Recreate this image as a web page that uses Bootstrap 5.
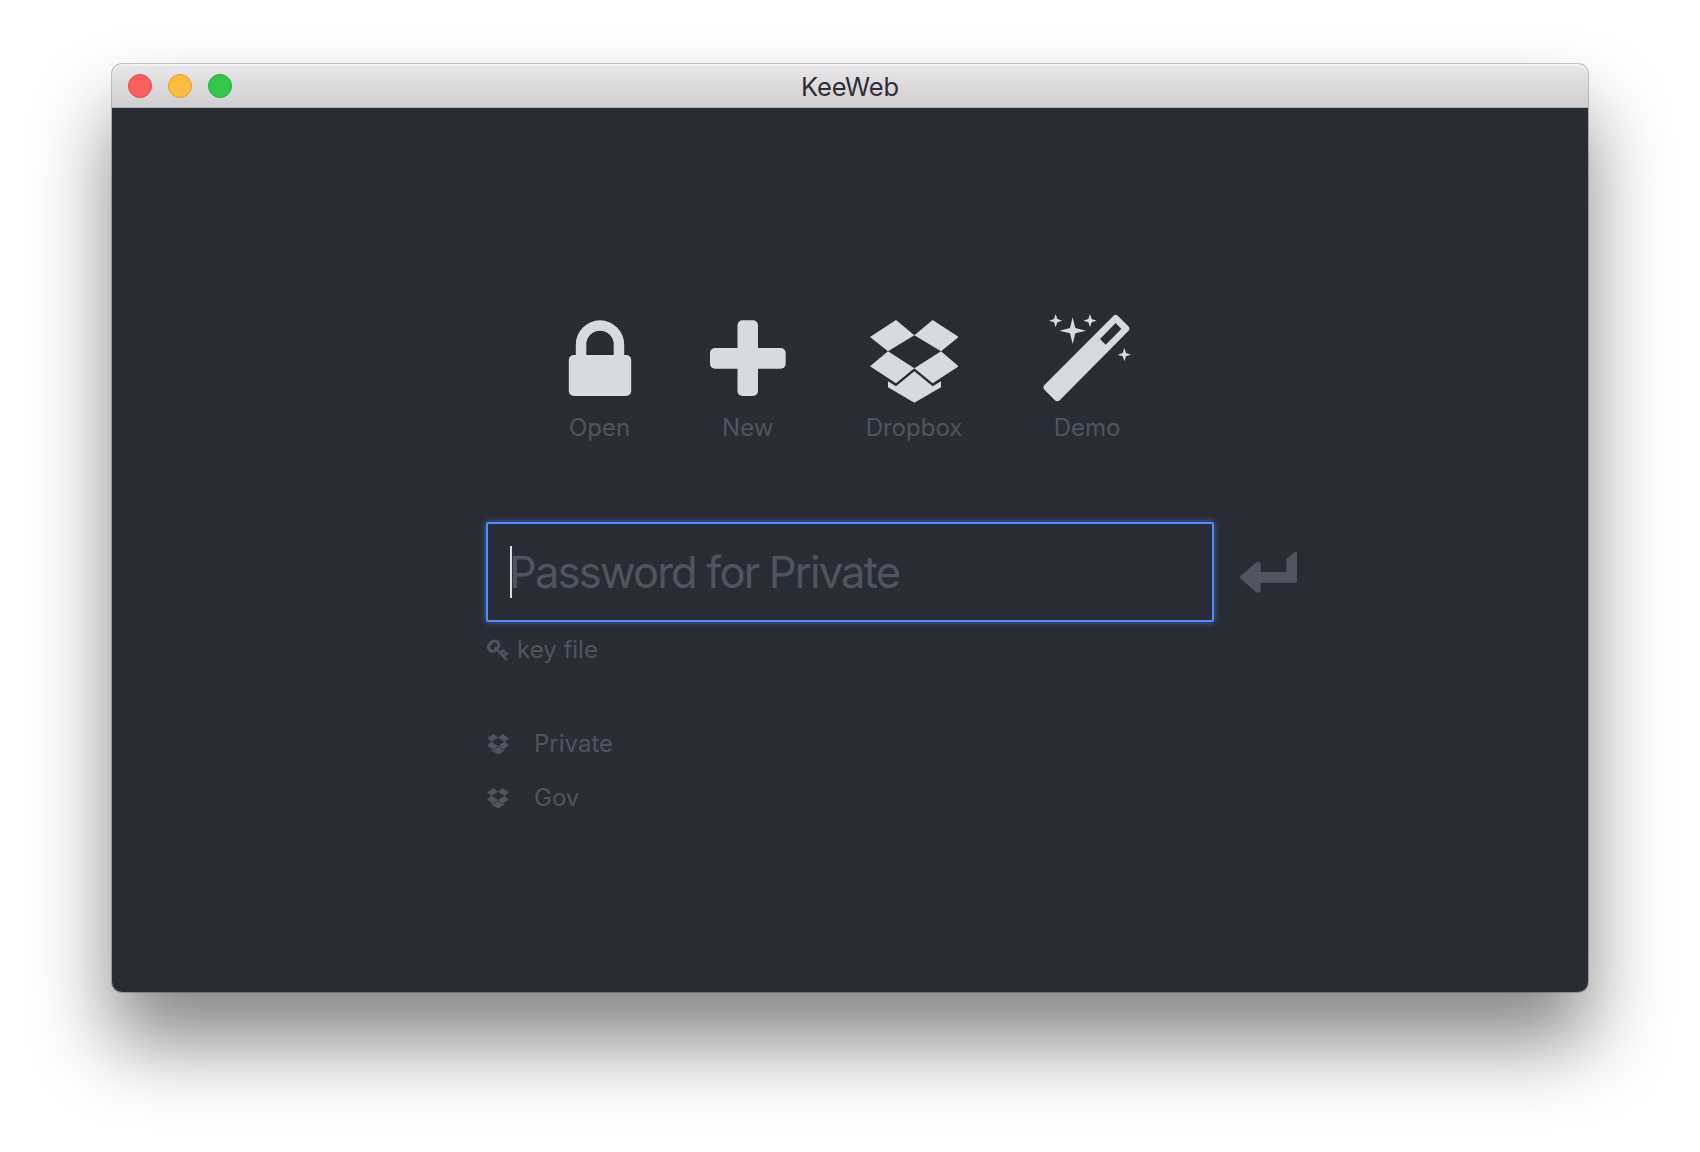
<!DOCTYPE html>
<html lang="en">
<head>
<meta charset="utf-8">
<title>KeeWeb</title>
<link href="https://cdn.jsdelivr.net/npm/bootstrap@5.3.0/dist/css/bootstrap.min.css" rel="stylesheet">
<style>
body{background:#fff;font-family:Inter,"Noto Sans",sans-serif;height:1152px;padding-top:64px}
svg{display:block;flex:none;fill:currentColor}
.app-window{width:1476px;height:928px;border-radius:10px;background:#282c34;box-shadow:0 0 0 1px rgba(0,0,0,.22),0 50px 80px rgba(0,0,0,.48)}
.titlebar{height:44px;border-radius:10px 10px 0 0;background:linear-gradient(#e9e7ea,#d2cfd3);border-bottom:1px solid #aeb0b3;box-shadow:inset 0 2px 0 #f5f4f5;padding-left:16px}
.light{width:24px;height:24px;border-radius:50%;border:1px solid}
.light-red{background:#fc605c;border-color:#df4744}
.light-amber{background:#fdbc40;border-color:#de9f34}
.light-green{background:#34c84a;border-color:#27aa35}
.app-title{left:0;right:0;top:5px;font-size:25.5px;line-height:36px;color:#302e33;letter-spacing:-.15px}
.actions{padding:202px 0 0 422.5px;color:#d7dae2}
.action-label{margin-top:4px;font-size:24px;line-height:36px;color:#50545f}
.dim{color:#50545f;font-size:24px;line-height:36px}
.w-a{width:130px}.w-b{width:166.5px}.w-c{width:166px}.w-d{width:180px}
.entry{margin:76px 0 0 374px;gap:26px}
.pass-box{width:728px;height:100px}
.pass-box .form-control{height:100px;border:2px solid #528bff;border-radius:2px;background:#282c34;padding:0 21px;font-size:43.5px;letter-spacing:-1.8px;box-shadow:0 0 6px rgba(82,139,255,.65)}
.pass-box .form-control::placeholder{color:#50545f;opacity:1}
.caret{left:24px;top:24px;width:2px;height:52px;background:#d7dae2}
.extras{margin-left:373.5px}
.keyrow{padding-top:10px;gap:8.5px}
.recent{padding:58px 0 0 1.5px;gap:18px}
.recent-row{gap:25px}
</style>
<script src="https://cdn.jsdelivr.net/npm/bootstrap@5.3.0/dist/js/bootstrap.bundle.min.js"></script>
</head>
<body>
<svg width="0" height="0" class="position-absolute"><defs>
<symbol id="dropbox" viewBox="59 60 266 248"><path d="M137 60L192 106 113 154 59 111ZM247 60L325 111 272 154 192 106ZM113 154L192 205 137 250 59 199ZM272 154L325 199 247 250 192 205ZM192 214L247 259 272 244V262L192 308 113 262V244L137 259Z"/></symbol>
</defs></svg>
<main class="app-window mx-auto">
  <header class="titlebar position-relative d-flex align-items-center">
    <div class="d-flex gap-3"><span class="light light-red"></span><span class="light light-amber"></span><span class="light light-green"></span></div>
    <div class="app-title position-absolute text-center">KeeWeb</div>
  </header>
  <section class="actions d-flex">
    <div class="w-a d-flex flex-column align-items-center">
      <svg width="64" height="96" viewBox="567.5 310 64 96"><path fill-rule="evenodd" d="M575.3 355V344.5A24.2 24.2 0 0 1 623.7 344.5V355H625.7A5 5 0 0 1 630.7 360V391A5 5 0 0 1 625.7 396H573.3A5 5 0 0 1 568.3 391V360A5 5 0 0 1 573.3 355ZM585.8 355H613.2V344.5A13.7 13.7 0 0 0 585.8 344.5Z"/></svg>
      <div class="action-label">Open</div>
    </div>
    <div class="w-b d-flex flex-column align-items-center">
      <svg width="76" height="96" viewBox="0 0 76 96"><rect x="27.5" y="10.3" width="20.5" height="75.7" rx="5"/><rect x="0" y="38" width="75.7" height="20.7" rx="5"/></svg>
      <div class="action-label">New</div>
    </div>
    <div class="w-c d-flex flex-column align-items-center">
      <svg width="88.67" height="96" viewBox="59 30 266 288"><use href="#dropbox" x="59" y="60" width="266" height="248"/></svg>
      <div class="action-label">Dropbox</div>
    </div>
    <div class="w-d d-flex flex-column align-items-center">
      <svg width="88" height="96" viewBox="581 30 264 288"><path fill-rule="evenodd" d="M792 48Q799 41 806 48L837 79Q844 87 837 93L632 300Q624 308 616 300L586 270Q578 262 586 254ZM799 69L752 117 769 134 816 87Z"/><path d="M670 52L678 84 710 92 678 100 670 132 662 100 630 92 662 84ZM619 42L624 57 639 62 624 67 619 82 614 67 599 62 614 57ZM722 42L727 57 742 62 727 67 722 82 717 67 702 62 717 57ZM825 144L830 159 845 164 830 169 825 184 820 169 805 164 820 159Z"/></svg>
      <div class="action-label">Demo</div>
    </div>
  </section>
  <section class="entry d-flex align-items-center">
    <div class="pass-box position-relative"><input class="form-control" type="text" placeholder="Password for Private"><span class="caret position-absolute"></span></div>
    <svg class="dim" width="57.3" height="42" viewBox="239 121 172 126"><path d="M241 196L288 155Q295 150 301 158V184H378V146L402 124Q410 120 410 128V210Q410 216 404 216H301V241Q296 250 288 245L241 204Q237 200 241 196Z"/></svg>
  </section>
  <section class="extras dim">
    <div class="keyrow d-flex align-items-center">
      <svg width="23" height="22" viewBox="47 26 69 66" fill="none" stroke="currentColor" stroke-linecap="round"><rect x="53" y="35" width="34" height="25" rx="12.5" stroke-width="9" fill="none" transform="rotate(-45 70 47.5)"/><path d="M75 53L108 87M90 68L98 60M99 75L111 69M98 60L102 64" stroke-width="7" fill="none"/></svg>
      <span>key file</span>
    </div>
    <div class="recent d-flex flex-column">
      <div class="recent-row d-flex align-items-center"><svg width="22" height="20.5"><use href="#dropbox" width="22" height="20.5"/></svg><span>Private</span></div>
      <div class="recent-row d-flex align-items-center"><svg width="22" height="20.5"><use href="#dropbox" width="22" height="20.5"/></svg><span>Gov</span></div>
    </div>
  </section>
</main>
</body>
</html>
